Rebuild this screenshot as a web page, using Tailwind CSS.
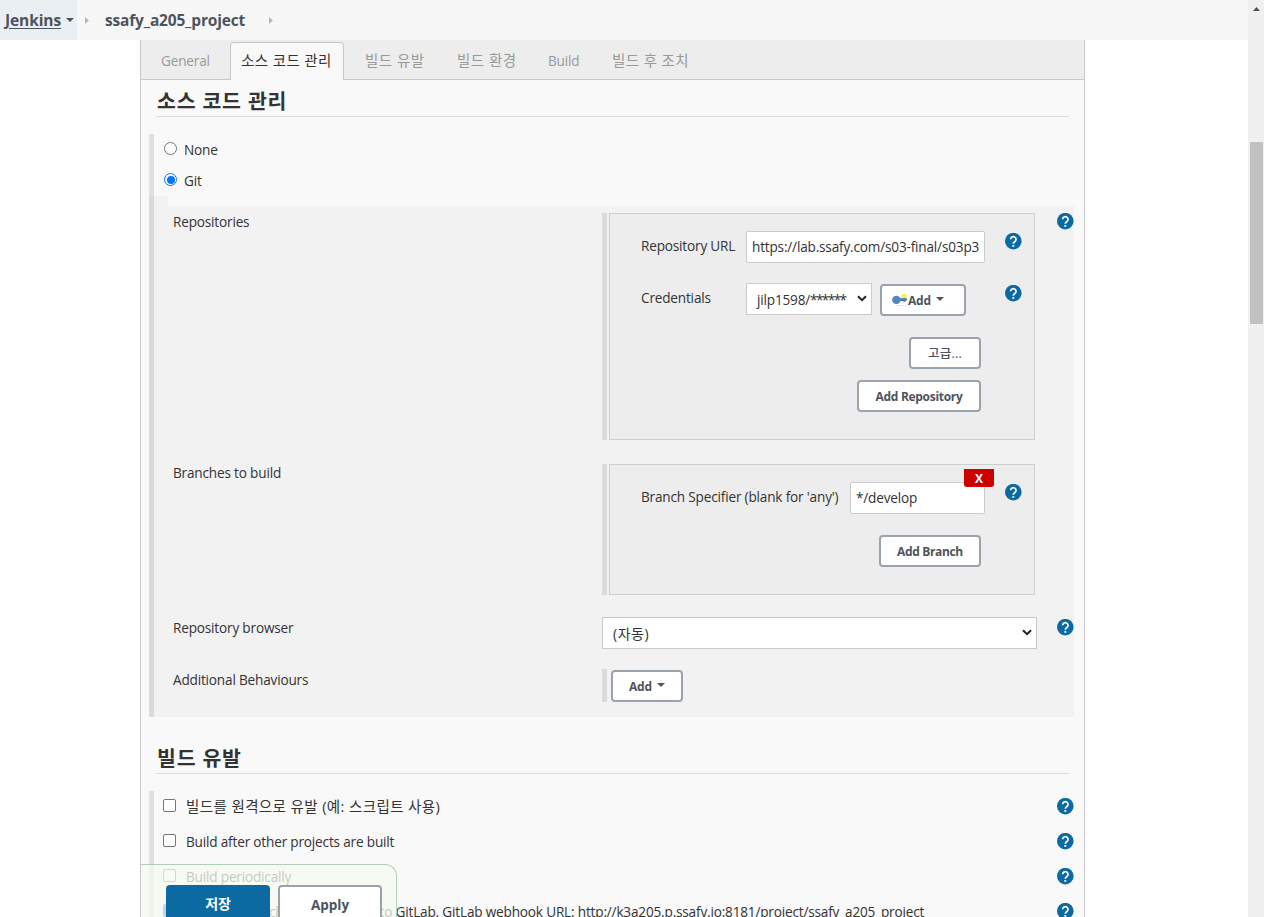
<!DOCTYPE html>
<html lang="ko">
<head>
<meta charset="utf-8">
<title>ssafy_a205_project Config [Jenkins]</title>
<script src="https://cdn.jsdelivr.net/npm/@tailwindcss/browser@4"></script>
</head>
<body class="relative flex h-[917px] w-[1264px] overflow-hidden bg-white font-['Open_Sans','Noto_Sans_CJK_KR',sans-serif] text-[13.6px] leading-[20px] tracking-[-0.18px] whitespace-nowrap text-[#333]">
<svg class="hidden">
  <symbol id="help" viewBox="0 0 24 24"><circle cx="11.7" cy="11.5" r="11.7" fill="#0b6aa2"/><path d="M8 8.900a3.800 3.800 0 1 1 6 3.100c-1.400 1-2.300 1.600-2.300 3.200" fill="none" stroke="#fff" stroke-width="2.400"/><rect x="10.400" y="16.900" width="2.600" height="2.600" fill="#fff"/></symbol>
  <symbol id="chev" viewBox="0 0 10 7"><path d="M1 1.2l4 4 4-4" fill="none" stroke="#222" stroke-width="2"/></symbol>
</svg>
<div class="flex w-[1248px] flex-col">
  <header class="flex h-10 shrink-0 items-center bg-[#f7f7f7] text-[15.5px] font-bold text-[#4d545d]">
    <div class="flex h-10 w-[77px] items-center bg-[#e9eff2] pl-[5px]"><span class="w-[56px] underline underline-offset-2 tracking-[-0.1px]">Jenkins</span><svg class="ml-[5px] h-[4px] w-[8px]" viewBox="0 0 8 4"><path d="M0 0h8L4 4z" fill="#4d545d"/></svg></div>
    <svg class="ml-[8px] h-[7px] w-[4px]" viewBox="0 0 4 7"><path d="M0 0l4 3.500L0 7z" fill="#b5b5b5"/></svg>
    <span class="ml-[16px] w-[140px] tracking-[-0.18px]">ssafy_a205_project</span>
    <svg class="ml-[24px] h-[7px] w-[4px]" viewBox="0 0 4 7"><path d="M0 0l4 3.500L0 7z" fill="#b5b5b5"/></svg>
  </header>
  <main class="ml-[140px] flex w-[945px] flex-1 flex-col border-x border-[#c8c8c8] bg-[#f9f9f9]">
    <nav class="flex h-[40px] shrink-0 items-end border-b border-[#c8c8c8] bg-[#ededed] pl-[9px] text-[#999]">
      <span class="w-[80px] pb-[8px] pl-[11px]">General</span>
      <span class="-mb-px h-[38px] w-[114px] rounded-t-[4px] border border-b-0 border-[#c8c8c8] bg-[#f9f9f9] pt-[8px] pl-[10px] text-[#333]"><span class="text-[14.5px] tracking-[0.4px]">소스 코드 관리</span></span>
      <span class="w-[92px] pb-[8px] pl-[21px] text-[14.5px] tracking-[0.5px]">빌드 유발</span>
      <span class="w-[91px] pb-[8px] pl-[21px] text-[14.5px] tracking-[0.5px]">빌드 환경</span>
      <span class="w-[64px] pb-[8px] pl-[21px]">Build</span>
      <span class="pb-[8px] pl-[21px] text-[14.5px] tracking-[0.4px]">빌드 후 조치</span>
    </nav>
    <h2 class="ml-[15px] h-[37px] w-[913px] shrink-0 border-b border-[#dcdcdc] pt-[7px] pl-px text-[20.5px] leading-[28px] font-bold tracking-[0.8px]">소스 코드 관리</h2>
    <section class="mt-[17px] ml-[8px] flex h-[583px] shrink-0">
      <div class="w-[5px] bg-[#e0e0e0]"><div class="mt-[62px] h-[521px] bg-[#dadada]"></div></div>
      <div class="w-[920px]">
        <div class="flex h-[31px] items-center pl-[10px]"><span class="mb-[2px] size-[13px] rounded-full border border-[#767676] bg-white"></span><span class="ml-[7px]">None</span></div>
        <div class="flex h-[31px] items-center pl-[10px]"><span class="mb-[2px] flex size-[13px] items-center justify-center rounded-full border border-[#0075ff] bg-white"><span class="size-[8px] rounded-full bg-[#0075ff]"></span></span><span class="ml-[7px]">Git</span></div>
        <div class="h-[10px] w-[14px] bg-[#f2f2f2]"></div>
        <div class="flex h-[511px] flex-col bg-[#f2f2f2] pt-[7px] pl-[19px]">
          <div class="flex h-[227px]">
            <span class="-mt-[1px] w-[429px]">Repositories</span>
            <div class="w-[5px] bg-[#dadada]"></div>
            <div class="ml-[2px] flex w-[426px] flex-col border border-[#cfcfcf] bg-[#ededed] pt-[17px] pl-[31px]">
              <div class="flex h-[32px]">
                <span class="w-[105px] pt-[5px]">Repository URL</span>
                <div class="h-[32px] w-[239px] overflow-hidden rounded-[2px] border border-[#ccc] bg-white px-[5px] pt-[5px]">https://lab.ssafy.com/s03-final/s03p3</div>
                <svg class="mt-[2px] ml-[20px] size-[17px]"><use href="#help"/></svg>
              </div>
              <div class="mt-[20px] flex h-[33px]">
                <span class="w-[105px] pt-[5px]">Credentials</span>
                <div class="flex h-[32px] w-[126px] items-center border border-[#ccc] bg-white pt-[2px] pl-[10px]"><span class="w-[90px]">jilp1598/<span class="tracking-[-1.6px]">******</span></span><svg class="mb-[3px] ml-[10px] h-[7px] w-[10px]"><use href="#chev"/></svg></div>
                <div class="mt-px ml-[8px] flex h-[32px] w-[86px] items-center rounded-[4px] border-2 border-[#9aa3ab] bg-white pl-[10px] text-[12px] font-bold text-[#4d545d]">
                  <svg class="h-[14px] w-[16px] shrink-0" viewBox="0 0 16 14"><circle cx="12" cy="3.500" r="2.800" fill="#fbee55"/><path d="M6 5.200h8.800v2.600h-1.300v1h-2.300V8H6z" fill="#4a78b0"/><ellipse cx="4.400" cy="6.900" rx="4.300" ry="4.100" fill="#5585bd"/><path d="M4 12.500h8" stroke="#e4e4e4"/></svg>
                  <span class="w-[23px] pt-[2px]">Add</span><svg class="mb-[3px] ml-[5px] h-[4px] w-[8px]" viewBox="0 0 8 4"><path d="M0 0h8L4 4z" fill="#4d545d"/></svg>
                </div>
                <svg class="mt-[2px] ml-[39px] size-[17px]"><use href="#help"/></svg>
              </div>
              <div class="mt-[21px] ml-[268px] flex h-[32px] w-[72px] items-center justify-center rounded-[4px] border-2 border-[#9aa3ab] bg-white pt-[2px] text-[12.5px] font-medium tracking-[0.2px] text-[#4d545d]">고급...</div>
              <div class="mt-[11px] ml-[216px] flex h-[32px] w-[124px] items-center justify-center rounded-[4px] border-2 border-[#9aa3ab] bg-white pt-[2px] text-[12px] font-bold tracking-[-0.3px] text-[#4d545d]">Add Repository</div>
            </div>
            <svg class="ml-[22px] size-[17px]"><use href="#help"/></svg>
          </div>
          <div class="mt-[24px] flex h-[131px]">
            <span class="-mt-[1px] w-[429px]">Branches to build</span>
            <div class="w-[5px] bg-[#dadada]"></div>
            <div class="relative ml-[2px] flex w-[426px] flex-col border border-[#cfcfcf] bg-[#ededed] pt-[17px] pl-[31px]">
              <div class="flex h-[32px]">
                <span class="w-[209px] pt-[5px]">Branch Specifier (blank for 'any')</span>
                <div class="h-[32px] w-[135px] rounded-[2px] border border-[#ccc] bg-white px-[5px] pt-[5px]">*/develop</div>
                <svg class="mt-[2px] ml-[20px] size-[17px]"><use href="#help"/></svg>
              </div>
              <div class="absolute top-[4px] left-[354px] h-[18px] w-[30px] rounded-b-[3px] bg-[#c00] text-center text-[12px] leading-[19px] font-bold text-white">X</div>
              <div class="mt-[21px] ml-[238px] flex h-[32px] w-[102px] items-center justify-center rounded-[4px] border-2 border-[#9aa3ab] bg-white pt-[2px] text-[12px] font-bold tracking-[-0.35px] text-[#4d545d]">Add Branch</div>
            </div>
          </div>
          <div class="mt-[22px] flex h-[32px]">
            <span class="mt-[1px] w-[429px]">Repository browser</span>
            <div class="flex w-[435px] items-center border border-[#c8c8c8] bg-white pt-[2px] pl-[10px]"><span class="w-[399px] text-[14px] tracking-[0.5px]">(자동)</span><svg class="mb-[3px] ml-[10px] h-[7px] w-[10px]"><use href="#chev"/></svg></div>
            <svg class="mt-[2px] ml-[20px] size-[17px]"><use href="#help"/></svg>
          </div>
          <div class="mt-[20px] flex h-[33px]">
            <span class="mt-px w-[429px]">Additional Behaviours</span>
            <div class="w-[5px] bg-[#dadada]"></div>
            <div class="mt-px ml-[4px] flex h-[32px] w-[72px] items-center rounded-[4px] border-2 border-[#9aa3ab] bg-white pl-[16px] text-[12px] font-bold text-[#4d545d]"><span class="w-[23px] pt-[2px]">Add</span><svg class="mb-[3px] ml-[5px] h-[4px] w-[8px]" viewBox="0 0 8 4"><path d="M0 0h8L4 4z" fill="#4d545d"/></svg></div>
          </div>
        </div>
      </div>
    </section>
    <h2 class="mt-[19px] ml-[15px] h-[38px] w-[913px] shrink-0 border-b border-[#dcdcdc] pt-[8px] pl-px text-[20.5px] leading-[28px] font-bold tracking-[0.8px]">빌드 유발</h2>
    <section class="mt-[17px] ml-[8px] flex h-[126px] shrink-0">
      <div class="w-[5px] bg-[#e0e0e0]"></div>
      <div class="-mt-[3px] w-[920px]">
        <div class="flex h-[35px] items-center pl-[9px]"><span class="size-[13px] rounded-[2px] border border-[#767676] bg-white"></span><span class="ml-[10px] flex-1 pt-[3px] text-[14.5px] tracking-[0.4px]">빌드를 원격으로 유발 (예: 스크립트 사용)</span><svg class="mt-px size-[17px]"><use href="#help"/></svg></div>
        <div class="flex h-[35px] items-center pl-[9px]"><span class="size-[13px] rounded-[2px] border border-[#767676] bg-white"></span><span class="ml-[10px] flex-1 pt-[2px]">Build after other projects are built</span><svg class="mt-px size-[17px]"><use href="#help"/></svg></div>
        <div class="flex h-[35px] items-center pl-[9px]"><span class="size-[13px] rounded-[2px] border border-[#767676] bg-white"></span><span class="ml-[10px] flex-1 pt-[2px]">Build periodically</span><svg class="mt-px size-[17px]"><use href="#help"/></svg></div>
        <div class="flex h-[35px] items-center pl-[9px]"><span class="size-[13px] rounded-[2px] bg-[#0075ff]"></span><span class="ml-[10px] flex-1 pt-[2px]">Build when a change is pushed to GitLab. GitLab webhook URL: http://k3a205.p.ssafy.io:8181/project/ssafy_a205_project</span><svg class="mt-px size-[17px]"><use href="#help"/></svg></div>
      </div>
    </section>
  </main>
</div>
<aside class="flex w-[16px] flex-col items-center bg-[#f0f0f0]">
  <svg class="mt-[7px] h-[4px] w-[7px]" viewBox="0 0 7 4"><path d="M3.500 0L7 4H0z" fill="#505050"/></svg>
  <div class="mt-[131px] h-[182px] w-[13px] bg-[#c1c1c1]"></div>
</aside>
<div class="absolute top-[864px] left-[141px] flex h-[53px] w-[256px] overflow-hidden rounded-tr-[12px] border border-b-0 border-l-0 border-[#b3cdbb] bg-[#f5f9ef]/75 pt-[20px] pl-[25px] text-[14px] font-bold">
  <div class="h-[40px] w-[104px] shrink-0 rounded-[4px] bg-[#0b6aa2] text-center leading-[38px] text-white">저장</div>
  <div class="ml-[8px] h-[40px] w-[104px] shrink-0 rounded-[4px] border-2 border-[#9aa3ab] bg-white text-center text-[13.500px] leading-[37px] tracking-normal text-[#4d545d]">Apply</div>
</div>
</body>
</html>
